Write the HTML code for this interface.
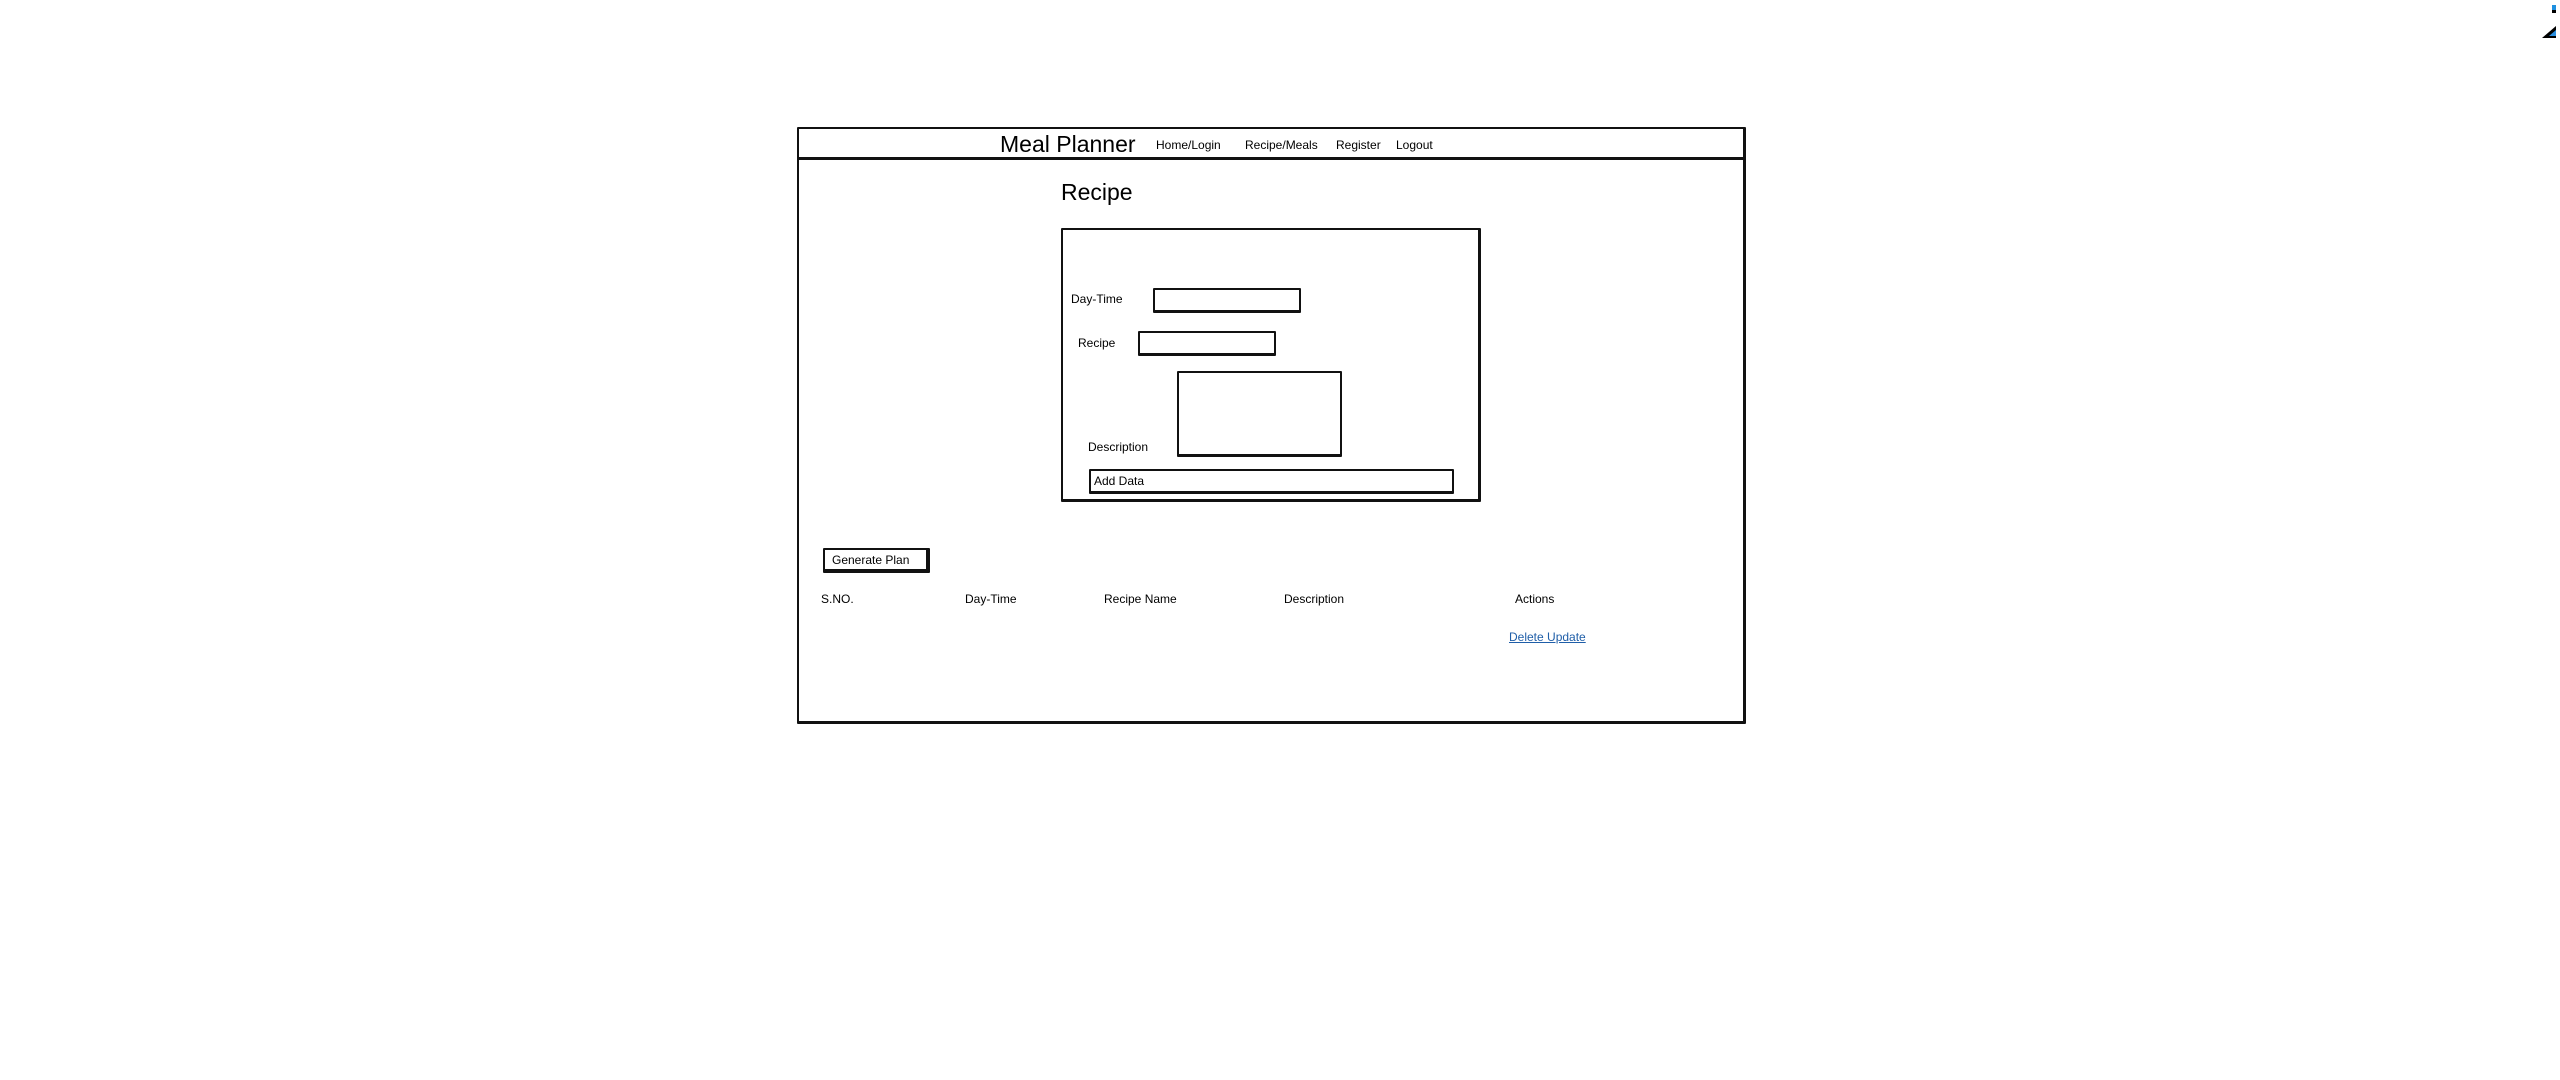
<!DOCTYPE html>
<html><head><meta charset="utf-8"><style>
body{margin:0;width:2560px;height:1080px;background:#fff;position:relative;overflow:hidden;font-family:"Liberation Sans",sans-serif;color:#000}
.a{position:absolute;white-space:nowrap}
.b{position:absolute;border:2px solid #111;box-sizing:border-box;border-radius:1px}
.t{font-size:12px;line-height:13px}
</style></head><body>
<div class="b" style="left:797px;top:127px;width:949px;height:597px;border-width:2px 3px 3px 2px"></div>
<div class="a" style="left:797px;top:157px;width:949px;height:3px;background:#111"></div>
<div class="a" style="left:1000px;top:131px;font-size:23px;line-height:26px">Meal Planner</div>
<div class="a t" style="left:1156px;top:139px">Home/Login</div>
<div class="a t" style="left:1245px;top:139px">Recipe/Meals</div>
<div class="a t" style="left:1336px;top:139px">Register</div>
<div class="a t" style="left:1396px;top:139px">Logout</div>
<div class="a" style="left:1061px;top:179px;font-size:23px;line-height:26px">Recipe</div>
<div class="b" style="left:1061px;top:228px;width:420px;height:274px;border-width:2px 3px 3px 2px"></div>
<div class="a t" style="left:1071px;top:293px">Day-Time</div>
<div class="b" style="left:1153px;top:288px;width:148px;height:25px;border-bottom-width:3px"></div>
<div class="a t" style="left:1078px;top:337px">Recipe</div>
<div class="b" style="left:1138px;top:331px;width:138px;height:25px;border-bottom-width:3px"></div>
<div class="b" style="left:1177px;top:371px;width:165px;height:86px;border-bottom-width:3px"></div>
<div class="a t" style="left:1088px;top:441px">Description</div>
<div class="b" style="left:1089px;top:469px;width:365px;height:25px;border-bottom-width:3px"></div>
<div class="a t" style="left:1094px;top:475px">Add Data</div>
<div class="b" style="left:823px;top:548px;width:107px;height:25px;border-width:2px 4px 4px 2px"></div>
<div class="a t" style="left:832px;top:554px">Generate Plan</div>
<div class="a t" style="left:821px;top:593px">S.NO.</div>
<div class="a t" style="left:965px;top:593px">Day-Time</div>
<div class="a t" style="left:1104px;top:593px">Recipe Name</div>
<div class="a t" style="left:1284px;top:593px">Description</div>
<div class="a t" style="left:1515px;top:593px">Actions</div>
<div class="a t" style="left:1509px;top:631px;color:#1f5ea8;text-decoration:underline">Delete Update</div>
<svg class="a" style="left:2530px;top:0" width="30" height="40"><rect x="22" y="5" width="4" height="5" fill="#1e90e0"/><rect x="22" y="10" width="4" height="3" fill="#000"/><polygon points="12,38 26,26 26,38" fill="#000"/><polygon points="19,36 26,30 26,36" fill="#2a8fe0"/></svg>
</body></html>
